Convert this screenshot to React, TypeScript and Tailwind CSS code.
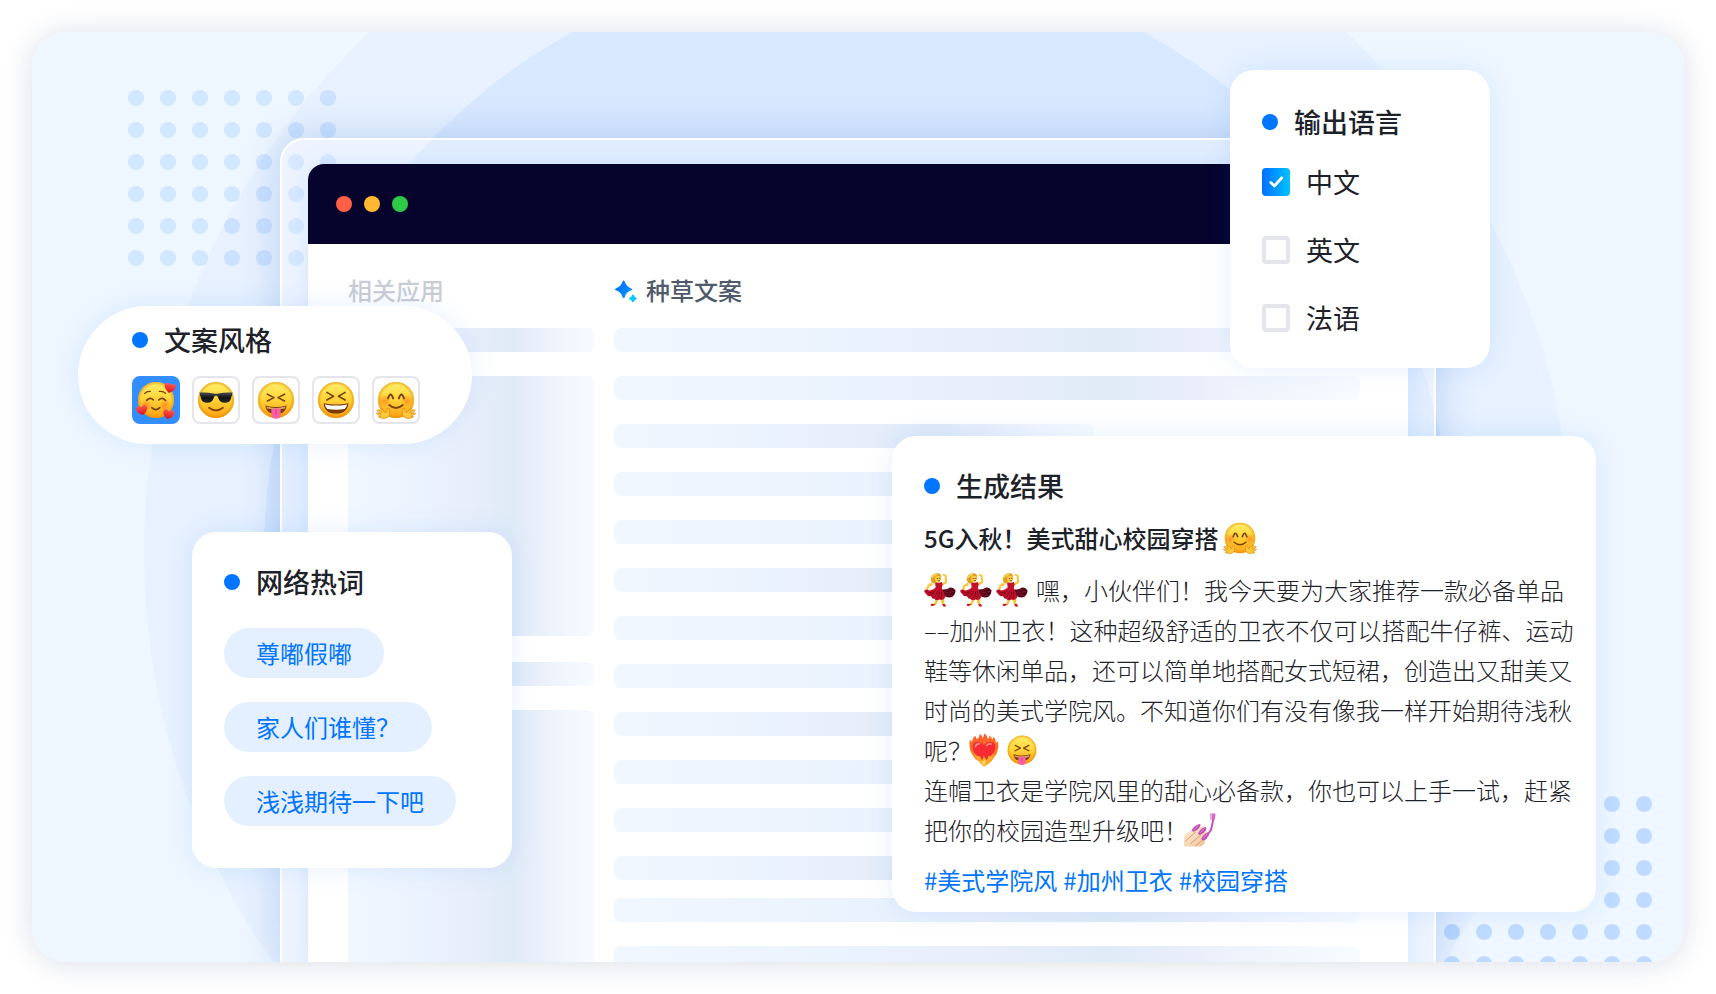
import { useState, type ReactNode } from "react";

type IconProps = { className?: string };

const FONT = "font-['Noto_Sans_CJK_SC','Noto_Sans',sans-serif]";
const CARD = "absolute bg-white shadow-[0_0_28px_rgba(0,117,255,0.1)]";

function Gradients() {
  return (
    <svg className="absolute size-0" aria-hidden="true">
      <defs>
        <linearGradient id="face" x1="0" y1="0" x2="0" y2="1">
          <stop offset="0" stopColor="#fff06a" />
          <stop offset="0.5" stopColor="#ffd336" />
          <stop offset="1" stopColor="#fb9f14" />
        </linearGradient>
        <radialGradient id="rim" cx="0.5" cy="0.5" r="0.5">
          <stop offset="0.82" stopColor="#e88a00" stopOpacity="0" />
          <stop offset="1" stopColor="#e88a00" stopOpacity="0.65" />
        </radialGradient>
        <radialGradient id="blush">
          <stop offset="0" stopColor="#ff6a1a" stopOpacity="0.6" />
          <stop offset="1" stopColor="#ff6a1a" stopOpacity="0" />
        </radialGradient>
        <linearGradient id="heart" x1="0" y1="0" x2="0" y2="1">
          <stop offset="0" stopColor="#ff5a4f" />
          <stop offset="1" stopColor="#d90f1e" />
        </linearGradient>
        <linearGradient id="lens" x1="0" y1="0" x2="0" y2="1">
          <stop offset="0" stopColor="#4a4e55" />
          <stop offset="0.5" stopColor="#121417" />
          <stop offset="1" stopColor="#25282c" />
        </linearGradient>
        <linearGradient id="flame" x1="0" y1="0" x2="0" y2="1">
          <stop offset="0" stopColor="#ff5a2c" />
          <stop offset="0.6" stopColor="#ff7a1f" />
          <stop offset="1" stopColor="#ffc933" />
        </linearGradient>
        <linearGradient id="skin" x1="0" y1="0" x2="1" y2="1">
          <stop offset="0" stopColor="#fff0d8" />
          <stop offset="1" stopColor="#eebf95" />
        </linearGradient>
        <linearGradient id="sparkle" gradientUnits="userSpaceOnUse" x1="2" y1="3" x2="22" y2="24">
          <stop offset="0" stopColor="#0068ff" />
          <stop offset="0.55" stopColor="#008cff" />
          <stop offset="0.9" stopColor="#00d0ff" />
        </linearGradient>
      </defs>
    </svg>
  );
}

function Face({ className = "size-10", label, children }: IconProps & { label: string; children: ReactNode }) {
  return (
    <svg viewBox="0 0 40 40" className={`shrink-0 ${className}`} role="img" aria-label={label}>
      <circle cx="20" cy="20" r="18" fill="url(#face)" />
      <circle cx="20" cy="20" r="18" fill="url(#rim)" />
      {children}
    </svg>
  );
}

function MiniHeart({ x, y, turn }: { x: number; y: number; turn: number }) {
  return (
    <path
      transform={`translate(${x} ${y}) rotate(${turn})`}
      d="M0 5.4C-3.6 3.1-5.8.9-5.6-1.8-5.4-4.3-2.2-5.3 0-2.6 2.2-5.3 5.4-4.3 5.6-1.8 5.8.9 3.6 3.1 0 5.4Z"
      fill="url(#heart)"
    />
  );
}

function HeartsFace({ className }: IconProps) {
  return (
    <Face className={className} label="微笑爱心">
      <circle cx="10" cy="25" r="6" fill="url(#blush)" />
      <circle cx="29" cy="25" r="6" fill="url(#blush)" />
      <g fill="none" stroke="#7a4310" strokeLinecap="round">
        <path d="M8.5 13.6Q11 11 14.3 11.4M23.4 11.4Q27 10.8 29.6 13.2" strokeWidth="1.3" />
        <path d="M10.6 20.4Q14 16.6 17.4 19.8M22.8 19.8Q26.2 16.6 29.6 20.4" strokeWidth="1.7" />
        <path d="M15.8 27.6Q19.8 31.6 23.8 27.6" strokeWidth="1.7" />
      </g>
      <MiniHeart x={34} y={7.6} turn={12} />
      <MiniHeart x={5.8} y={29.8} turn={-10} />
      <MiniHeart x={32.6} y={34} turn={10} />
    </Face>
  );
}

function ShadesFace({ className }: IconProps) {
  return (
    <Face className={className} label="酷">
      <path
        d="M3.6 12.6Q11 12 17.6 13.4 20 14 22.4 13.4 29 12 36.4 12.6L36 15.4Q35.4 15.8 35.2 17.4 34.4 22.6 29 22.8 23.6 23 22.2 17.8 21.4 15.4 20 15.4 18.6 15.4 17.8 17.8 16.4 23 11 22.8 5.6 22.6 4.8 17.4 4.6 15.8 4 15.4Z"
        fill="url(#lens)"
      />
      <path d="M13 27.8Q20 33 27 27.8" fill="none" stroke="#7a4310" strokeWidth="1.7" strokeLinecap="round" />
    </Face>
  );
}

function TongueFace({ className }: IconProps) {
  return (
    <Face className={className} label="吐舌">
      <path
        d="M11.4 14.2 18 17.6 11.4 21M28.6 14.2 22 17.6 28.6 21"
        fill="none"
        stroke="#7a4310"
        strokeWidth="1.6"
        strokeLinecap="round"
        strokeLinejoin="round"
      />
      <path d="M9.4 25.4Q20 28.4 30.6 25.4 30 34 20 34 10 34 9.4 25.4Z" fill="#7c3a0c" />
      <path d="M10.6 26.6Q20 29.2 29.4 26.6L29 28.6Q20 30.8 11 28.6Z" fill="#d9a06a" />
      <path d="M15.4 29.2Q20 27.8 24.6 29.2V34.4Q24.4 38.8 20 38.8 15.6 38.8 15.4 34.4Z" fill="#fb5fa4" />
      <path d="M20 30V35" stroke="#d93c84" strokeWidth="1" strokeLinecap="round" />
    </Face>
  );
}

function LaughFace({ className }: IconProps) {
  return (
    <Face className={className} label="大笑">
      <path
        d="M10.8 12.4 17.6 16.2 10.8 20M29.2 12.4 22.4 16.2 29.2 20"
        fill="none"
        stroke="#7a4310"
        strokeWidth="1.6"
        strokeLinecap="round"
        strokeLinejoin="round"
      />
      <path d="M7.6 23.2Q20 25.6 32.4 23.2 31.6 33.6 20 33.6 8.4 33.6 7.6 23.2Z" fill="#7c3a0c" />
      <path d="M9 24.4Q20 26.8 31 24.4 30.6 28 28.6 29 20 30.6 11.4 29 9.4 28 9 24.4Z" fill="#fff" />
    </Face>
  );
}

const PALM =
  "M11.8 28.2Q13.8 27.6 13.4 30.6 14.4 34.8 12 37.2 8.8 39.6 5.2 38 2.2 37.4 2.4 36.6L5 36.2 .8 34Q.2 32.8 1.6 32.8L5 34 1 30.6Q1 29.2 2.4 29.8L6.4 32.6 4 29.4Q4.4 28 5.8 29.2L9.8 32.8Z";

function HugFace({ className }: IconProps) {
  return (
    <Face className={className} label="拥抱">
      <circle cx="8.6" cy="21" r="6.5" fill="url(#blush)" />
      <circle cx="31.4" cy="21" r="6.5" fill="url(#blush)" />
      <g fill="none" stroke="#7a4310" strokeLinecap="round">
        <path d="M12 18.4Q14.6 10.4 17.2 18.4M22.8 18.4Q25.4 10.4 28 18.4" strokeWidth="2" />
        <path d="M13.2 25Q20 31 26.8 25" strokeWidth="1.8" />
      </g>
      <g fill="#ffc83a" stroke="#dd8a10" strokeWidth="0.7" strokeLinejoin="round">
        <path d={PALM} />
        <path transform="translate(40 0) scale(-1 1)" d={PALM} />
      </g>
    </Face>
  );
}

function Dancer() {
  return (
    <svg viewBox="0 0 32 34" className="h-[34px] w-8 shrink-0" role="img" aria-label="跳舞">
      <path d="M17.4 10.8 21.2 8.4 20.6 3.2 18.6 2.4Q18.8 .8 20.6 1.2L22.6 2.2 23.2 9.4 18.6 12.8Z" fill="#ffc52e" />
      <path d="M7.6 9.4 3.4 12.2 2 16.4 4 17.2 5.2 13.6 9 12Z" fill="#ffc52e" />
      <path d="M11.6 25 11.2 29.2 7.4 31.4 8 32.6 12.6 31 14.6 26ZM16.6 25 17.4 30 19.6 33 21.4 32.4 20 29.4 20.4 24.4Z" fill="#ffc52e" />
      <path d="M7.4 30.8 6.4 32 8 33.2 12.2 31.4ZM18 31.2 19.6 33.8 22.4 33.2 20.6 31Z" fill="#c9142a" />
      <path d="M18 16.4Q22.6 17 26 14.6 29.4 14 31.6 17.4 31.4 21.6 28.6 23.8 24 25.6 19.6 22.6Z" fill="#4d0716" />
      <path d="M20.4 18.4 27.4 15.6M21 20 30 18.4M21 21.8 28.6 22.2" stroke="#8d1230" strokeWidth="0.9" />
      <path
        d="M11 8.8Q14 10.4 18 9L18.6 11.4 17.8 15.2Q20.4 18.6 21.2 24.4 18.6 27.8 15.6 26.6 12.8 28.4 10.4 26 7.8 26 7 23.2 3.6 24 2.2 21 -.2 19.4 .4 17.2 2.8 15.8 5.2 17.6 9.4 17 11.6 14.8Z"
        fill="#c4102a"
      />
      <path
        d="M1.6 18.2Q5 21 9.4 18.8M4.2 22.4Q8.4 21.8 11.6 18M8.2 25Q12.4 22.8 13.8 18.2M12.2 26.4Q15.8 23.4 15.8 18.4M16.6 25.6Q18.4 22.4 17.6 18.4"
        fill="none"
        stroke="#7d0819"
        strokeWidth="1"
      />
      <path d="M8 9.6Q5.6 6.2 8.2 2.6 11.2-.8 15.2 .6 17.6 1.6 17.2 4.4L12.4 9.6Q10.2 11.6 8 9.600Z" fill="#e0a01a" />
      <path d="M11.4 3.6Q14.600 2 17 4 17.6 7.400 15.400 9.200 12.600 9.600 11.400 7.400Z" fill="#ffd24a" />
      <path d="M7.8 4.6Q9.8 1.8 13.2 1.400" fill="none" stroke="#ffdc58" strokeWidth="1.200" />
      <path d="M13 5.4H14M15.4 5.400H16.2M14 7.600H15.600" stroke="#7a4310" strokeWidth="0.8" strokeLinecap="round" />
    </svg>
  );
}

function BurningHeart() {
  return (
    <svg viewBox="0 0 32 34" className="h-[34px] w-8 shrink-0" role="img" aria-label="燃烧的心">
      <path
        d="M16 33.5Q13 31.6 11.4 28.6 7 27 4.6 22 1.2 17.6 1.6 12 1.2 8.6 2.2 6.6 3.2 9 4.2 8.4 4.6 4.6 7.8 2.8 7.4 5.6 9.2 6 11.6 4.8 11.8 1 14.4 2.4 14.6 5.6 16.2 3.6 16 .4 19.6 2 19.8 5.8 21.6 5.4 21.6 2.6 23.8 4 24 6.8 25.6 5.8 25.2 3.8 28.4 6.2 27.8 9.8 29.4 9.6 29.4 7.8 31.4 13 29.6 17.6 29 22 26 24.6 23.6 29.6 20 31.2Z"
        fill="url(#flame)"
      />
      <path d="M16 28.5C8.6 23.4 4.2 18.8 4.6 13.6 5 8 11.6 6.8 16 12 20.4 6.8 27 8 27.4 13.6 27.8 18.8 23.4 23.4 16 28.5Z" fill="#f52a32" />
      <path d="M7.4 13.6Q8.2 10.6 11.4 10.8M18.8 12.4Q20.6 10.2 23 11" fill="none" stroke="#ff9a94" strokeWidth="1.6" strokeLinecap="round" />
      <path
        d="M16 33.4Q11.6 30.4 10.6 26.4 8.2 25.6 6.4 21.2 9.8 24.2 11.8 23 13.4 25.4 13.8 27.8 15.6 25.2 15.4 22.6 18.2 25 18 28 20.6 25.8 20.4 22.8 23.4 24 25.4 20.8 24.4 25.8 21.8 27.6 20.4 31.4 16 33.4Z"
        fill="#ffa52c"
      />
      <path d="M16 32.6Q13.6 30 13.8 28 16 29.4 16.6 26.6 18.8 29.4 16 32.6Z" fill="#ffe15a" />
    </svg>
  );
}

function NailPolish() {
  return (
    <svg viewBox="0 0 32 34" className="h-[34px] w-8 shrink-0" role="img" aria-label="美甲">
      <path d="M0 22.5 9.4 14.4Q12.6 11.6 14 13.6L16.6 14Q20.4 12.4 20.6 15.4L20.4 17.8 22.8 18.8Q25.4 19.8 23.6 22.6L21 28.8Q20.4 32 16.8 33.6H0Z" fill="url(#skin)" />
      <path d="M1.4 28 11.4 19.2M6.6 30.4 16.6 22.2M11.6 33 19.4 26" fill="none" stroke="#cf9a70" strokeWidth="0.9" strokeLinecap="round" />
      <g fill="#c14db4">
        <path d="M8 16.8Q10.4 12 15.8 11Q17.2 11.4 15.8 14 13.4 17.6 9.6 18.8 8 18.8 8 16.8Z" />
        <path d="M14.2 20.2Q16.8 14.8 21.4 14 23.2 14.4 21.8 17.2 19.6 20.8 16 21.8 14.2 22 14.2 20.2Z" />
        <path d="M17.4 25.8Q19.6 20.8 24 19.4 25.8 19.6 24.8 22.2 23 26.2 19.4 27.6 17.4 27.8 17.4 25.8Z" />
      </g>
      <path d="M10 16.4 14 12.6M16.2 19.6 20 15.8M19.4 25.2 23 21.4" stroke="#e79ade" strokeWidth="0.9" strokeLinecap="round" />
      <path d="M29.4 6 27 17 24 20.8" fill="none" stroke="#c553b5" strokeWidth="2" strokeLinecap="round" />
      <path d="M26.2 .4H31.4L31 6.2 26.6 7Z" fill="#d564c4" />
      <path d="M27.6 1V6.4" stroke="#f1b3e8" strokeWidth="1" />
    </svg>
  );
}

function Sparkles() {
  return (
    <svg viewBox="0 0 24 24" className="size-6 shrink-0" aria-hidden="true">
      <path
        d="M9.6 2.6Q10.4 2.6 10.7 3.6 12.2 8.6 17.2 10.4 18.2 10.8 18.2 11.4 18.2 12 17.2 12.3 12.2 14 10.7 19.3 10.4 20.2 9.6 20.2 9 20.2 8.6 19.3 7 14 1.9 12.3 1 12 1 11.4 1 10.8 1.9 10.4 7 8.6 8.6 3.6 9 2.6 9.6 2.6Z"
        fill="url(#sparkle)"
      />
      <path
        d="M18.9 16.6Q19.7 16.6 20 17.6 20.4 19.1 21.8 19.6 22.8 19.9 22.8 20.6 22.8 21.3 21.8 21.6 20.4 22.1 20 23.5 19.7 24 18.9 24 18.2 24 17.9 23.5 17.4 22.1 16 21.6 15 21.3 15 20.6 15 19.9 16 19.6 17.4 19.1 17.9 17.6 18.2 16.6 18.9 16.6Z"
        fill="#00c8ff"
      />
    </svg>
  );
}

function DotGrid({ rows, className }: { rows: number; className: string }) {
  return (
    <svg width="208" height={rows * 32 - 16} className={`absolute ${className}`} aria-hidden="true">
      {Array.from({ length: rows * 7 }, (_, i) => (
        <circle key={i} cx={8 + (i % 7) * 32} cy={8 + Math.floor(i / 7) * 32} r="8" fill="currentColor" />
      ))}
    </svg>
  );
}

function Bar({ className = "h-6" }: IconProps) {
  return (
    <div
      className={`shrink-0 rounded-md bg-[linear-gradient(90deg,#f0f7ff_0%,#eaf2fd_34%,#e8eefa_50%,#dfebf7_66%,#e8eefa_76%,#f1f6fd_88%,#f8fbff_100%)] ${className}`}
    />
  );
}

function CardTitle({ children }: { children: ReactNode }) {
  return (
    <h2 className="flex h-9 items-center gap-4 text-[27px] font-medium text-[#1d2129]">
      <span className="size-4 shrink-0 rounded-full bg-[#0075ff]" />
      {children}
    </h2>
  );
}

function BrowserWindow() {
  return (
    <section className="relative mx-auto mt-[106px] w-full max-w-[1156px] rounded-t-3xl border-2 border-b-0 border-white bg-white/25 px-[26px] pt-6 shadow-[0_0_40px_rgba(0,84,180,0.2)]">
      <div className="overflow-hidden rounded-t-2xl bg-white shadow-[0_0_24px_rgba(0,117,255,0.1)]">
        <header className="flex h-20 items-center gap-3 bg-[#06032d] px-7">
          <span className="size-4 rounded-full bg-[#ff5f45]" />
          <span className="size-4 rounded-full bg-[#ffb830]" />
          <span className="size-4 rounded-full bg-[#2dcb45]" />
        </header>
        <div className="flex gap-5 pt-[26px] pr-12 pl-10">
          <aside className="flex w-[246px] shrink-0 flex-col gap-6">
            <h2 className="-mb-1.5 flex h-10 items-center text-2xl font-medium text-[#c9cdd4]">相关应用</h2>
            <Bar />
            <Bar className="mb-0.5 h-[260px]" />
            <Bar />
            <Bar className="h-[260px]" />
          </aside>
          <div className="flex min-w-0 flex-1 flex-col gap-6">
            <h2 className="-mb-1.5 flex h-10 items-center gap-2 text-2xl font-medium text-[#4e5969]">
              <Sparkles />
              种草文案
            </h2>
            {Array.from({ length: 12 }, (_, i) => (
              <Bar key={i} className={i % 3 === 2 ? "h-6 w-[480px]" : "h-6"} />
            ))}
            <Bar className="-mt-1.5 h-6" />
            <Bar />
          </div>
        </div>
      </div>
    </section>
  );
}

const STYLES = [HeartsFace, ShadesFace, TongueFace, LaughFace, HugFace];
const STYLE_NAMES = ["甜蜜", "酷炫", "俏皮", "开心", "热情"];

function StyleCard() {
  const [active, setActive] = useState(0);
  return (
    <section className={`${CARD} top-[274px] left-[46px] rounded-full pt-4 pr-[52px] pb-5 pl-[54px]`}>
      <CardTitle>文案风格</CardTitle>
      <div className="mt-[18px] flex gap-3">
        {STYLES.map((Emoji, i) => (
          <button
            key={STYLE_NAMES[i]}
            type="button"
            aria-label={STYLE_NAMES[i]}
            aria-pressed={i === active}
            onClick={() => setActive(i)}
            className={`grid size-12 place-items-center rounded-lg border-2 ${i === active ? "border-[#338fff] bg-[#338fff]" : "border-[#e5e6eb] bg-white"}`}
          >
            <Emoji />
          </button>
        ))}
      </div>
    </section>
  );
}

function LanguageCard() {
  return (
    <section className={`${CARD} top-[38px] right-[194px] w-[260px] rounded-3xl px-8 pt-[34px] pb-9`}>
      <CardTitle>输出语言</CardTitle>
      <div className="mt-7 flex flex-col gap-10">
        {["中文", "英文", "法语"].map((name, i) => (
          <label key={name} className="flex h-7 items-center gap-4 text-[27px] text-[#1d2129]">
            <span className="grid size-7 shrink-0">
              <input
                type="checkbox"
                defaultChecked={i === 0}
                className="peer col-start-1 row-start-1 size-7 appearance-none rounded border-4 border-[#e5e6eb] bg-white checked:border-0 checked:bg-[linear-gradient(90deg,#006eff,#00c3ff)]"
              />
              <svg viewBox="0 0 28 28" className="pointer-events-none col-start-1 row-start-1 hidden size-7 peer-checked:block" aria-hidden="true">
                <path d="M8.8 14.4 12.4 18 19.8 9.8" fill="none" stroke="#fff" strokeWidth="2.8" strokeLinecap="round" strokeLinejoin="round" />
              </svg>
            </span>
            {name}
          </label>
        ))}
      </div>
    </section>
  );
}

function HotWordsCard() {
  return (
    <section className={`${CARD} top-[500px] left-40 w-80 rounded-3xl px-8 pt-8 pb-[42px]`}>
      <CardTitle>网络热词</CardTitle>
      <div className="mt-7 flex flex-col items-start gap-6">
        {["尊嘟假嘟", "家人们谁懂？", "浅浅期待一下吧"].map((word) => (
          <button key={word} type="button" className="h-[50px] rounded-full bg-[#e4f0ff] px-8 text-2xl whitespace-nowrap text-[#0075ff]">
            {word}
          </button>
        ))}
      </div>
    </section>
  );
}

function Line({ children }: { children: ReactNode }) {
  return <span className="flex h-10 items-center whitespace-nowrap">{children}</span>;
}

function ResultCard() {
  return (
    <section className={`${CARD} top-[404px] right-[88px] w-[704px] rounded-3xl px-8 pt-8 pb-3.5`}>
      <CardTitle>生成结果</CardTitle>
      <h3 className="mt-3.5 flex h-10 items-center gap-1 text-2xl font-medium text-[#1d2129]">
        5G入秋！美式甜心校园穿搭
        <HugFace className="size-[34px]" />
      </h3>
      <p className="mt-3 text-2xl font-light text-[#1d2129]">
        <Line>
          <span className="mr-2 flex gap-1">
            <Dancer />
            <Dancer />
            <Dancer />
          </span>
          嘿，小伙伴们！我今天要为大家推荐一款必备单品
        </Line>
        <Line>––加州卫衣！这种超级舒适的卫衣不仅可以搭配牛仔裤、运动</Line>
        <Line>鞋等休闲单品，还可以简单地搭配女式短裙，创造出又甜美又</Line>
        <Line>时尚的美式学院风。不知道你们有没有像我一样开始期待浅秋</Line>
        <Line>
          呢？
          <span className="-ml-1 flex items-center gap-1.5">
            <BurningHeart />
            <TongueFace className="size-8" />
          </span>
        </Line>
        <Line>连帽卫衣是学院风里的甜心必备款，你也可以上手一试，赶紧</Line>
        <Line>
          把你的校园造型升级吧！
          <span className="-ml-1">
            <NailPolish />
          </span>
        </Line>
      </p>
      <div className="mt-3 flex h-9 items-center gap-1.5 text-2xl text-[#0075ff]">
        {["#美式学院风", "#加州卫衣", "#校园穿搭"].map((tag) => (
          <a key={tag} href="#tag">
            {tag}
          </a>
        ))}
      </div>
    </section>
  );
}

export default function App() {
  return (
    <main className={`flex h-screen min-h-[900px] flex-col bg-white p-8 ${FONT}`}>
      <Gradients />
      <div className="min-h-0 flex-1 rounded-[34px] shadow-[0_2px_30px_rgba(20,50,100,0.16)]">
        <div className="relative flex h-full flex-col overflow-hidden rounded-[34px] bg-[#eef6ff]">
          <div className="absolute -top-[193px] left-1/2 size-[1428px] -translate-x-1/2 rounded-full bg-[#e7f1ff]" />
          <div className="absolute -top-[73px] left-1/2 size-[1188px] -translate-x-1/2 rounded-full bg-[#d8e8ff]" />
          <DotGrid rows={6} className="top-[58px] left-24 text-[#0075ff]/12" />
          <DotGrid rows={6} className="top-[764px] right-8 text-[#0075ff]/20" />
          <BrowserWindow />
          <StyleCard />
          <LanguageCard />
          <HotWordsCard />
          <ResultCard />
        </div>
      </div>
    </main>
  );
}
